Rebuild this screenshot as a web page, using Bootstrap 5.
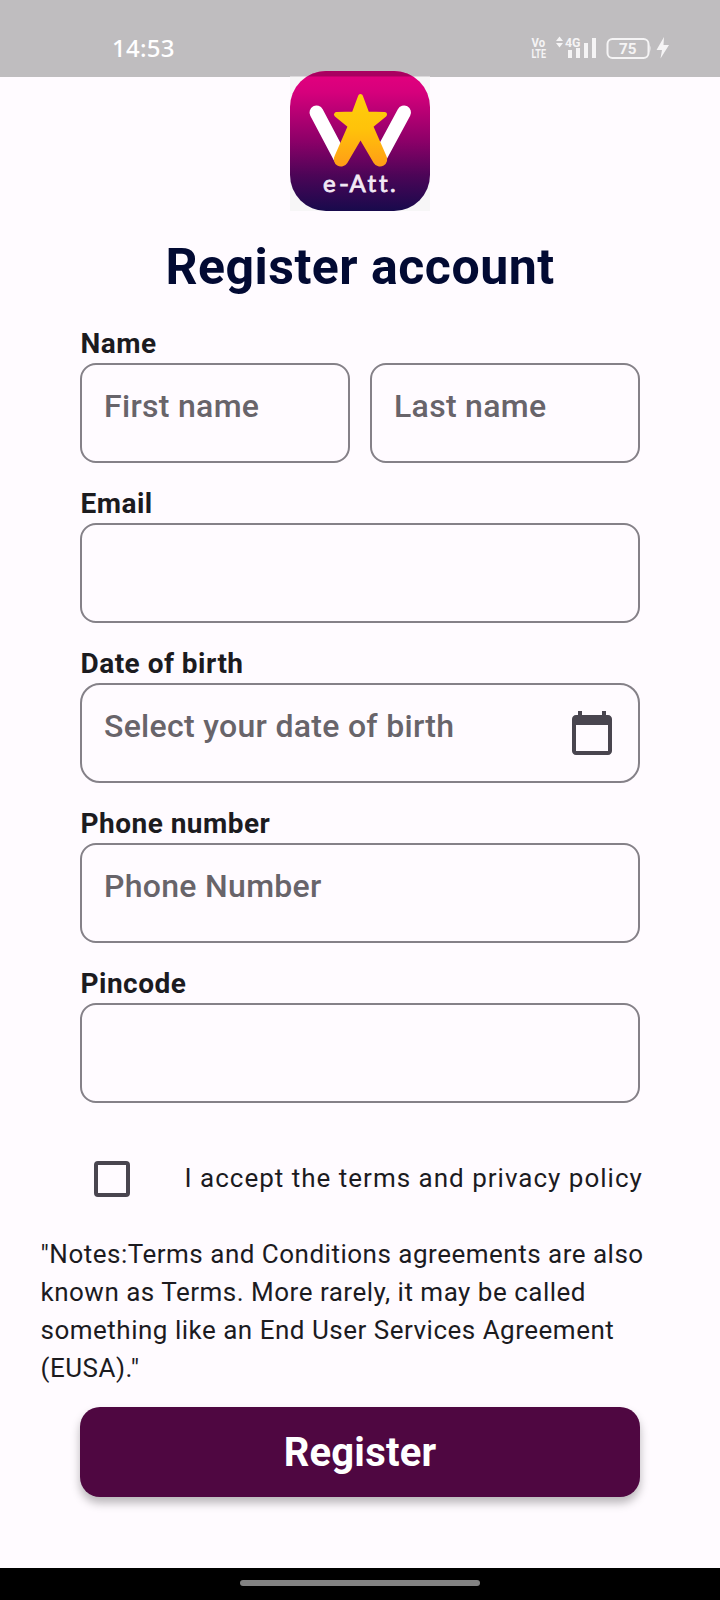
<!DOCTYPE html>
<html lang="en">
<head>
<meta charset="utf-8">
<meta name="viewport" content="width=device-width, initial-scale=1">
<title>Register account</title>
<link href="https://cdn.jsdelivr.net/npm/bootstrap@5.3.0/dist/css/bootstrap.min.css" rel="stylesheet">
<style>
  body { font-family: Roboto, sans-serif; background: #fffbff; color: #1c1b1f; width: 720px; height: 1600px; overflow: hidden; }
  .status-bar { height: 76.5px; background: #bfbdbf; color: #fff; padding: 20px 50px 0 112px; }
  .clock { font-family: "Noto Sans", sans-serif; font-size: 24px; font-weight: 500; line-height: 56px; letter-spacing: .25px; }
  .logo { width: 140px; height: 140px; margin-top: -5.5px; }
  .title { font-size: 50px; line-height: 60px; font-weight: 700; color: #020a33; letter-spacing: .5px; margin: 25.5px 0 0; }
  .reg-form { padding: 0 80px; margin-top: 29.5px; }
  .field-label { font-size: 28px; line-height: 36px; font-weight: 700; letter-spacing: .48px; height: 37px; margin: 0; padding-left: .5px; display: block; }
  .field-box.form-control { height: 100px; border: 2px solid #858188; border-radius: 16px; background: transparent; padding: 2px 22px 16px; font-size: 32px; font-weight: 500; letter-spacing: .3px; color: #1c1b1f; }
  .field-box::placeholder { color: #68646a; opacity: 1; }
  .field-group { height: 160px; }
  .field-box.date-box { border-radius: 20px; }
  .date-icon { top: 26px; right: 24px; }
  .terms { height: 64px; padding-left: 94px; margin-top: 21px; }
  .terms-box.form-check-input { width: 36px; height: 36px; border: 4px solid #49454f; border-radius: 4px; background: transparent; margin: 0; flex: none; }
  .terms-text { font-size: 26px; line-height: 36px; letter-spacing: 1px; margin: -2px 0 0 54.500px; white-space: nowrap; }
  .notes { font-size: 26px; line-height: 38px; letter-spacing: .5px; margin: 24px 0 0 40.500px; white-space: nowrap; }
  .btn.btn-register { height: 90px; border: 0; border-radius: 20px; background: #4f0741; color: #fff; font-size: 40px; font-weight: 700; line-height: 60px; letter-spacing: .2px; box-shadow: 0 6px 10px rgba(0,0,0,.28); margin: 20px 80px 0; padding: 2px 0 0; width: 560px; }
  .gesture-bar { height: 32px; background: #000; }
  .gesture-pill { width: 240px; height: 6px; border-radius: 3px; background: #828282; margin-top: -2px; }
</style>
</head>
<body class="d-flex flex-column">
  <header class="status-bar d-flex justify-content-between flex-shrink-0">
    <span class="clock">14:53</span>
    <svg width="140" height="56" viewBox="530 20 140 56" fill="#f5f4f5" font-family="Roboto, sans-serif" font-weight="700">
      <text x="531.500" y="46.500" font-size="12" textLength="13.500" lengthAdjust="spacingAndGlyphs">Vo</text>
      <text x="531.500" y="57.500" font-size="12" textLength="14.500" lengthAdjust="spacingAndGlyphs">LTE</text>
      <path d="M556 41l3.500-4.500 3.500 4.500zM556 43h7l-3.500 4.500z"/>
      <text x="565" y="46.500" font-size="13.500" textLength="15.500" lengthAdjust="spacingAndGlyphs">4G</text>
      <path d="M568 50h4v8h-4zM576 48h4v10h-4zM584 43h4v15h-4zM592 38h4v20h-4z"/>
      <rect x="607.500" y="39" width="41" height="19" rx="5" fill="none" stroke="#f5f4f5" stroke-width="2"/>
      <path d="M649.500 44.500q2 4 0 8z"/>
      <text x="619" y="54" font-size="15.500" textLength="17.500" lengthAdjust="spacingAndGlyphs">75</text>
      <path d="M664 37l-7.500 13h5.500l-1.500 8.500 8.500-13.500h-5.500z"/>
    </svg>
  </header>

  <main class="flex-grow-1">
    <svg class="logo d-block mx-auto position-relative" viewBox="0 0 140 140">
      <defs>
        <linearGradient id="tile" x1="0" y1="0" x2="0" y2="1">
          <stop offset="0" stop-color="#e5007e"/><stop offset=".15" stop-color="#d6007c"/>
          <stop offset=".5" stop-color="#8c0068"/><stop offset=".75" stop-color="#4b0557"/><stop offset="1" stop-color="#180a4c"/>
        </linearGradient>
        <linearGradient id="gold" gradientUnits="userSpaceOnUse" x1="0" y1="22" x2="0" y2="95">
          <stop offset="0" stop-color="#ffd00c"/><stop offset=".5" stop-color="#ffc20a"/><stop offset="1" stop-color="#ff9d16"/>
        </linearGradient>
        <clipPath id="tileclip"><rect width="140" height="140" rx="36"/></clipPath>
      </defs>
      <rect y="5.500" width="140" height="134.500" fill="#f7f6f7"/>
      <rect width="140" height="140" rx="36" fill="url(#tile)"/>
      <rect width="140" height="5.500" fill="#8a0050" opacity=".65" clip-path="url(#tileclip)"/>
      <path d="M26.500 41.500L50 86M114 41.500L90 86" stroke="#fff" stroke-width="14" stroke-linecap="round"/>
      <g fill="url(#gold)">
        <path stroke="url(#gold)" stroke-width="5" stroke-linejoin="round" d="M70.500 25.500L77 43L94.500 43.500L81 54.500L70.500 60L60 54.500L46.500 43.500L64 43Z"/>
        <path d="M83.500 55.500L96.200 84.500A7.200 7.200 0 0 1 83.700 92L70.500 69.500L57.300 92A7.200 7.200 0 0 1 44.800 84.500L57.500 55.500L70.500 50Z"/>
      </g>
      <text x="33" y="121" font-family="Lato, sans-serif" font-size="24" fill="#f3e9f5" stroke="#f3e9f5" stroke-width=".8"><tspan>e</tspan><tspan x="49" textLength="10" lengthAdjust="spacingAndGlyphs">-</tspan><tspan x="59.500">A</tspan><tspan x="77.500">t</tspan><tspan x="89">t</tspan><tspan x="100">.</tspan></text>
    </svg>
    <h1 class="title text-center">Register account</h1>

    <form class="reg-form">
      <div class="field-group">
        <label class="field-label" for="first">Name</label>
        <div class="d-flex" style="gap:20px">
          <input id="first" class="form-control field-box" placeholder="First name">
          <input class="form-control field-box" placeholder="Last name" aria-label="Last name">
        </div>
      </div>
      <div class="field-group">
        <label class="field-label" for="email">Email</label>
        <input id="email" class="form-control field-box">
      </div>
      <div class="field-group">
        <label class="field-label" for="dob">Date of birth</label>
        <div class="position-relative">
          <input id="dob" class="form-control field-box date-box" placeholder="Select your date of birth">
          <svg class="date-icon position-absolute" width="48" height="48" viewBox="0 0 24 24" fill="#49454f"><path d="M20 3h-1V1h-2v2H7V1H5v2H4c-1.100 0-2 .9-2 2v16c0 1.100.9 2 2 2h16c1.100 0 2-.9 2-2V5c0-1.100-.9-2-2-2zm0 18H4V8h16v13z"/></svg>
        </div>
      </div>
      <div class="field-group">
        <label class="field-label" for="phone">Phone number</label>
        <input id="phone" class="form-control field-box" placeholder="Phone Number">
      </div>
      <div class="field-group">
        <label class="field-label" for="pin">Pincode</label>
        <input id="pin" class="form-control field-box">
      </div>
    </form>

    <div class="terms d-flex align-items-center">
      <input id="accept" type="checkbox" class="form-check-input terms-box">
      <label class="terms-text" for="accept">I accept the terms and privacy policy</label>
    </div>
    <p class="notes">"Notes:Terms and Conditions agreements are also<br>known as Terms. More rarely, it may be called<br>something like an End User Services Agreement<br>(EUSA)."</p>
    <button type="button" class="btn btn-register">Register</button>
  </main>

  <footer class="gesture-bar d-flex align-items-center justify-content-center flex-shrink-0">
    <div class="gesture-pill"></div>
  </footer>
<script src="https://cdn.jsdelivr.net/npm/bootstrap@5.3.0/dist/js/bootstrap.bundle.min.js"></script>
</body>
</html>
